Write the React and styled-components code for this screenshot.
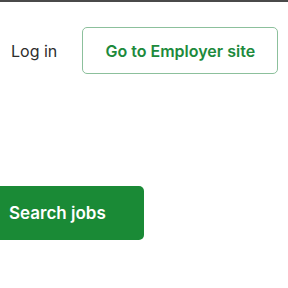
import React from "react";
import styled, { createGlobalStyle } from "styled-components";

const Global = createGlobalStyle`
  html, body { margin: 0; padding: 0; background: #fff; }
  body { font-family: Inter, "Noto Sans", "Liberation Sans", sans-serif; overflow: hidden; }
`;

const Page = styled.div`
  width: 288px;
  height: 288px;
  border-top: 2px solid #4a4a4a;
  box-sizing: border-box;
  overflow: hidden;
`;

const Header = styled.header`
  display: flex;
  align-items: center;
  gap: 25px;
  padding: 25px 0 0 11px;
`;

const LoginLink = styled.a`
  font-size: 16px;
  color: #2d2d2d;
  text-decoration: none;
  line-height: 20px;
`;

const OutlineButton = styled.a`
  display: flex;
  align-items: center;
  justify-content: center;
  box-sizing: border-box;
  width: 196px;
  height: 47px;
  border: 1px solid #8cc09c;
  border-radius: 5px;
  color: #1d8a3c;
  font-size: 16px;
  font-weight: 600;
  text-decoration: none;
`;

const Hero = styled.section`
  padding-top: 112px;
  margin-left: -27px;
`;

const PrimaryButton = styled.button`
  display: flex;
  align-items: center;
  box-sizing: border-box;
  height: 54px;
  width: 171px;
  padding: 0 0 0 36px;
  border: none;
  border-radius: 5px;
  background: #1a8a36;
  color: #fff;
  font-family: inherit;
  font-size: 17px;
  font-weight: 600;
`;

export default function App() {
  return (
    <Page>
      <Global />
      <Header>
        <LoginLink>Log in</LoginLink>
        <OutlineButton>Go to Employer site</OutlineButton>
      </Header>
      <Hero>
        <PrimaryButton>Search jobs</PrimaryButton>
      </Hero>
    </Page>
  );
}
